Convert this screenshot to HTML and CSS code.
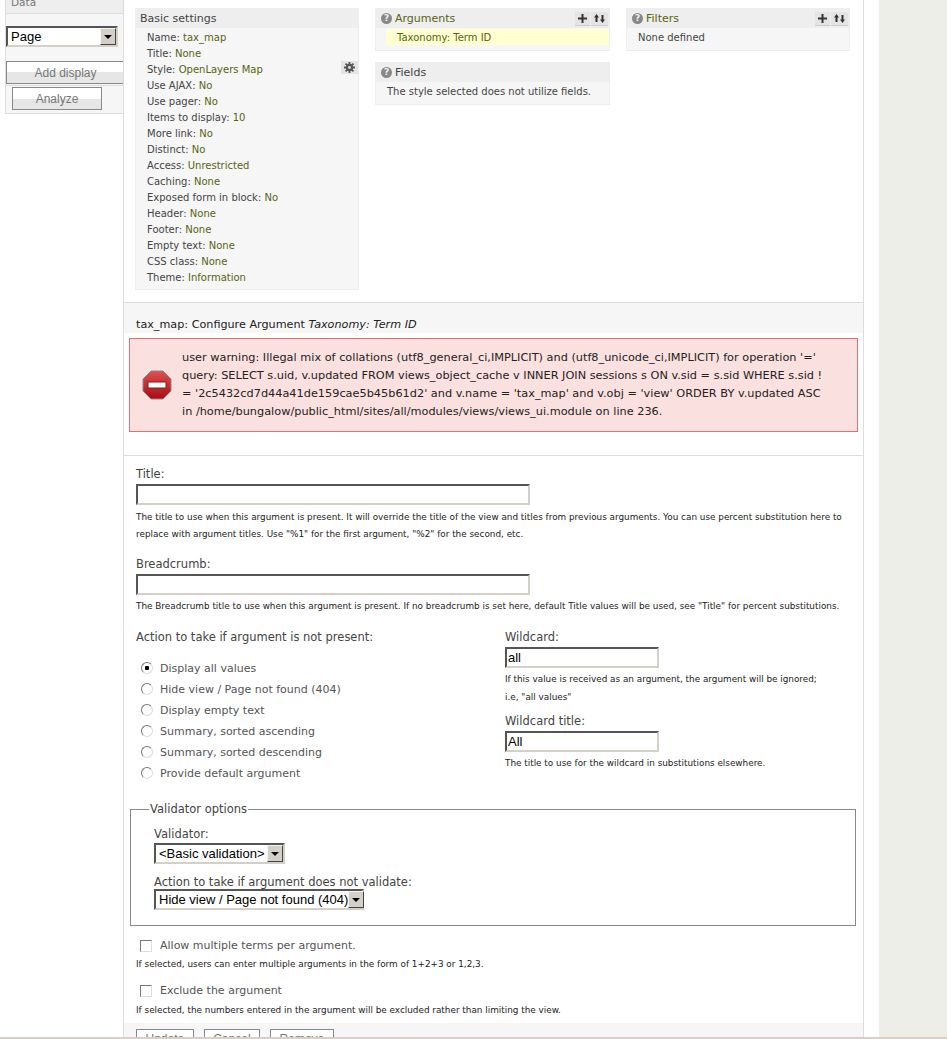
FILE: index.html
```html
<!DOCTYPE html>
<html lang="en">
<head>
    <meta charset="UTF-8">
    <meta name="viewport" content="width=device-width, initial-scale=1.0">
    <title>tax_map: Configure Argument</title>
    <link rel="stylesheet" href="styles.css">
</head>
<body>
    <div class="page">
        <!-- Displays sidebar -->
        <aside class="sidebar">
            <div class="sidebar-title"><span>Data</span></div>
            <div class="sidebar-select">
                <div class="select select-page"><span class="select-value">Page</span><span class="select-arrow"></span></div>
            </div>
            <div class="sidebar-add"><button class="side-button add-display">Add display</button></div>
            <div class="sidebar-analyze"><button class="side-button analyze">Analyze</button></div>
        </aside>

        <main class="main">
            <!-- View settings -->
            <section class="settings">
                <div class="settings-col col-basic">
                    <div class="box">
                        <h3 class="box-title">Basic settings</h3>
                        <ul class="basic-list">
                            <li>Name: <a>tax_map</a></li>
                            <li>Title: <a>None</a></li>
                            <li>Style: <a>OpenLayers Map</a>
                                <span class="gear">
                                    <svg width="11" height="11" viewBox="0 0 12 12"><path d="M5 0h2v2l1.2.5L9.6 1 11 2.400 9.500 3.800 10 5h2v2h-2l-.5 1.200L11 9.600 9.600 11 8.200 9.500 7 10v2H5v-2l-1.200-.5L2.400 11 1 9.600l1.500-1.400L2 7H0V5h2l.5-1.200L1 2.400 2.400 1l1.400 1.500L5 2z" fill="#555"/><circle cx="6" cy="6" r="1.600" fill="#ddd"/></svg>
                                </span>
                            </li>
                            <li>Use AJAX: <a>No</a></li>
                            <li>Use pager: <a>No</a></li>
                            <li>Items to display: <a>10</a></li>
                            <li>More link: <a>No</a></li>
                            <li>Distinct: <a>No</a></li>
                            <li>Access: <a>Unrestricted</a></li>
                            <li>Caching: <a>None</a></li>
                            <li>Exposed form in block: <a>No</a></li>
                            <li>Header: <a>None</a></li>
                            <li>Footer: <a>None</a></li>
                            <li>Empty text: <a>None</a></li>
                            <li>CSS class: <a>None</a></li>
                            <li>Theme: <a>Information</a></li>
                        </ul>
                    </div>
                </div>
                <div class="settings-col col-args">
                    <div class="box">
                        <h3 class="box-title"><span class="help">?</span><a>Arguments</a>
                            <span class="box-actions">
                                <span class="box-action"><svg width="11" height="11" viewBox="0 0 11 11"><path d="M4.500 1h2v3.500H10v2H6.500V10h-2V6.500H1v-2h3.500z" fill="#333"/></svg></span>
                                <span class="box-action action-sort"><svg width="13" height="11" viewBox="0 0 13 11"><path d="M3.500 1 6 4.500H4.500V9h-2V4.500H1zM9.500 10 7 6.500h1.500V2h2v4.500H12z" fill="#333"/></svg></span>
                            </span>
                        </h3>
                        <div class="box-body"><div class="arg-row"><a>Taxonomy: Term ID</a></div></div>
                    </div>
                    <div class="box">
                        <h3 class="box-title"><span class="help">?</span>Fields</h3>
                        <div class="box-body"><p class="box-text">The style selected does not utilize fields.</p></div>
                    </div>
                </div>
                <div class="settings-col col-filters">
                    <div class="box">
                        <h3 class="box-title"><span class="help">?</span><a>Filters</a>
                            <span class="box-actions">
                                <span class="box-action"><svg width="11" height="11" viewBox="0 0 11 11"><path d="M4.500 1h2v3.500H10v2H6.500V10h-2V6.500H1v-2h3.500z" fill="#333"/></svg></span>
                                <span class="box-action action-sort"><svg width="13" height="11" viewBox="0 0 13 11"><path d="M3.500 1 6 4.500H4.500V9h-2V4.500H1zM9.500 10 7 6.500h1.500V2h2v4.500H12z" fill="#333"/></svg></span>
                            </span>
                        </h3>
                        <div class="box-body"><p class="box-text">None defined</p></div>
                    </div>
                </div>
            </section>

            <div class="config-head">
                <h2 class="config-title">tax_map: Configure Argument <em>Taxonomy: Term ID</em></h2>
            </div>

            <!-- Error message -->
            <div class="message-error">
                <svg class="error-icon" width="30" height="30" viewBox="0 0 30 30">
                    <defs>
                        <linearGradient id="stopRed" x1="0" y1="0" x2="0" y2="1">
                            <stop offset="0" stop-color="#e05050"/>
                            <stop offset="1" stop-color="#a80c14"/>
                        </linearGradient>
                    </defs>
                    <path d="M9 1h12l8 8v12l-8 8H9l-8-8V9z" fill="url(#stopRed)" stroke="#8a8a8a" stroke-width="1"/>
                    <rect x="6" y="12" width="18" height="6" fill="#fff" stroke="#7a2020" stroke-width="1"/>
                </svg>
                <p class="error-text">user warning: Illegal mix of collations (utf8_general_ci,IMPLICIT) and (utf8_unicode_ci,IMPLICIT) for operation '='<br>query: SELECT s.uid, v.updated FROM views_object_cache v INNER JOIN sessions s ON v.sid = s.sid WHERE s.sid !<br>= '2c5432cd7d44a41de159cae5b45b61d2' and v.name = 'tax_map' and v.obj = 'view' ORDER BY v.updated ASC<br>in /home/bungalow/public_html/sites/all/modules/views/views_ui.module on line 236.</p>
            </div>

            <!-- Argument form -->
            <form class="config-form">
                <div class="form-item item-title">
                    <label class="form-label">Title:</label>
                    <input class="text-input input-wide" type="text">
                    <p class="description">The title to use when this argument is present. It will override the title of the view and titles from previous arguments. You can use percent substitution here to replace with argument titles. Use "%1" for the first argument, "%2" for the second, etc.</p>
                </div>
                <div class="form-item item-breadcrumb">
                    <label class="form-label">Breadcrumb:</label>
                    <input class="text-input input-wide" type="text">
                    <p class="description">The Breadcrumb title to use when this argument is present. If no breadcrumb is set here, default Title values will be used, see "Title" for percent substitutions.</p>
                </div>

                <div class="form-columns">
                    <div class="column-action">
                        <label class="form-label">Action to take if argument is not present:</label>
                        <div class="radios">
                            <label class="option"><input type="radio" name="action" checked>Display all values</label>
                            <label class="option"><input type="radio" name="action">Hide view / Page not found (404)</label>
                            <label class="option"><input type="radio" name="action">Display empty text</label>
                            <label class="option"><input type="radio" name="action">Summary, sorted ascending</label>
                            <label class="option"><input type="radio" name="action">Summary, sorted descending</label>
                            <label class="option"><input type="radio" name="action">Provide default argument</label>
                        </div>
                    </div>
                    <div class="column-wildcard">
                        <label class="form-label">Wildcard:</label>
                        <input class="text-input input-short" type="text" value="all">
                        <p class="description wildcard-desc">If this value is received as an argument, the argument will be ignored;<br>i.e, "all values"</p>
                        <label class="form-label label-wildcard-title">Wildcard title:</label>
                        <input class="text-input input-short" type="text" value="All">
                        <p class="description">The title to use for the wildcard in substitutions elsewhere.</p>
                    </div>
                </div>

                <fieldset class="validator">
                    <legend>Validator options</legend>
                    <label class="form-label">Validator:</label>
                    <div class="select select-validator"><span class="select-value">&lt;Basic validation&gt;</span><span class="select-arrow"></span></div>
                    <label class="form-label label-fail">Action to take if argument does not validate:</label>
                    <div class="select select-fail"><span class="select-value">Hide view / Page not found (404)</span><span class="select-arrow"></span></div>
                </fieldset>

                <div class="check-item">
                    <label class="option"><input type="checkbox">Allow multiple terms per argument.</label>
                    <p class="description">If selected, users can enter multiple arguments in the form of 1+2+3 or 1,2,3.</p>
                </div>
                <div class="check-item check-exclude">
                    <label class="option"><input type="checkbox">Exclude the argument</label>
                    <p class="description">If selected, the numbers entered in the argument will be excluded rather than limiting the view.</p>
                </div>

                <div class="form-buttons">
                    <button type="button" class="form-button">Update</button>
                    <button type="button" class="form-button">Cancel</button>
                    <button type="button" class="form-button">Remove</button>
                </div>
            </form>
        </main>

        <div class="gutter"></div>
    </div>
</body>
</html>
```

FILE: styles.css
```css
html, body {
    margin: 0;
    padding: 0;
    height: 1039px;
    overflow: hidden;
    background: #fff;
}
body {
    font-family: "DejaVu Sans", Verdana, sans-serif;
    font-size: 10px;
    color: #444;
}
.page {
    display: flex;
    height: 1039px;
    overflow: hidden;
    border-bottom: 2px solid #d6d0c8;
    box-sizing: border-box;
}

/* sidebar */
.sidebar {
    width: 118px;
    margin-left: 5px;
    height: 114px;
    flex: none;
    box-sizing: border-box;
    background: #f6f6f6;
    border-left: 1px solid #ddd;
    border-bottom: 1px solid #ddd;
}
.sidebar-title {
    height: 8px;
    padding: 0 0 5px 5px;
    background: #eee;
    border-bottom: 1px solid #ddd;
    overflow: hidden;
    display: flex;
    align-items: flex-end;
    color: #777;
    font-size: 10.500px;
}
.sidebar-select {
    padding: 12px 0 0 0;
    height: 35px;
}
.sidebar-add {
    height: 24px;
    border-bottom: 1px solid #ddd;
}
.sidebar-analyze {
    padding: 1px 0 0 6px;
}
.side-button {
    display: block;
    height: 23px;
    padding: 0;
    border: 1px solid #888;
    border-radius: 0;
    background: linear-gradient(#fff 50%, #e6e6e6 50%);
    color: #777;
    font-family: "Liberation Sans", Arial, sans-serif;
    font-size: 12px;
}
.add-display {
    width: 118px;
    border-right: 0;
}
.analyze {
    width: 90px;
}

/* selects */
.select {
    display: inline-flex;
    align-items: center;
    justify-content: space-between;
    box-sizing: border-box;
    height: 21px;
    background: #fff;
    border: 2px solid;
    border-color: #555 #d4d0c8 #d4d0c8 #555;
    color: #000;
    font-family: "Liberation Sans", Arial, sans-serif;
    font-size: 13px;
    white-space: nowrap;
}
.select-value {
    padding-left: 3px;
}
.select-arrow {
    flex: none;
    display: flex;
    align-items: center;
    justify-content: center;
    width: 16px;
    height: 17px;
    box-sizing: border-box;
    background: #d4d0c8;
    border: 1px solid;
    border-color: #f4f4f4 #444 #444 #f4f4f4;
}
.select-arrow::after {
    content: "";
    border: 4px solid transparent;
    border-top: 4px solid #000;
    border-bottom: 0;
}
.select-page {
    width: 112px;
}
.select-validator {
    width: 131px;
    margin-top: 1px;
}
.select-fail {
    width: 210px;
}

/* settings */
.main {
    width: 741px;
    flex: none;
    box-sizing: border-box;
    border-left: 1px solid #ddd;
    border-right: 1px solid #ddd;
}
.settings {
    display: flex;
    height: 303px;
    padding: 8px 0 0 11px;
    box-sizing: border-box;
    border-bottom: 1px solid #ddd;
}
.settings-col {
    display: flex;
    flex-direction: column;
    gap: 11px;
}
.col-basic {
    width: 224px;
    margin-right: 16px;
}
.col-args {
    width: 235px;
    margin-right: 16px;
}
.col-filters {
    width: 224px;
}
.box {
    background: #f6f6f6;
    border-bottom: 1px solid #eee;
    border-right: 1px solid #eee;
    border-left: 1px solid #eee;
}
.box-title {
    position: relative;
    display: flex;
    align-items: center;
    height: 20px;
    margin: 0;
    padding-left: 4px;
    background: #eee;
    font-size: 11px;
    font-weight: normal;
    color: #444;
}
.box-title a,
.basic-list a,
.arg-row a {
    color: #566410;
}
.help {
    flex: none;
    width: 11px;
    height: 11px;
    margin: 0 3px 0 1px;
    border-radius: 50%;
    background: #888;
    color: #eee;
    font-size: 9px;
    font-weight: bold;
    line-height: 11px;
    text-align: center;
}
.box-actions {
    position: absolute;
    right: 1px;
    top: 4px;
    display: flex;
    gap: 1px;
}
.box-action {
    display: flex;
    align-items: center;
    justify-content: center;
    width: 15px;
    height: 13px;
    background: #e4e4e4;
    border-bottom: 1px solid #ccc;
}
.action-sort {
    width: 17px;
}
.basic-list {
    list-style: none;
    margin: 0;
    padding: 1px 0 4px 11px;
}
.basic-list li {
    position: relative;
    height: 16px;
    line-height: 18px;
}
.gear {
    position: absolute;
    right: 0;
    top: 0;
    display: flex;
    align-items: center;
    justify-content: center;
    width: 17px;
    height: 13px;
    background: #e4e4e4;
}
.box-body {
    padding: 1px 0 5px 0;
}
.arg-row {
    margin-left: 10px;
    height: 16px;
    line-height: 18px;
    padding-left: 11px;
    background: #ffffd0;
}
.box-text {
    margin: 0 0 0 11px;
    height: 16px;
    line-height: 18px;
}

/* config */
.config-head {
    height: 30px;
    background: #f6f6f6;
    box-sizing: border-box;
    padding: 15px 0 0 12px;
}
.config-title {
    margin: 0;
    font-size: 11.200px;
    line-height: 14px;
    font-weight: normal;
    color: #222;
}
.message-error {
    display: flex;
    align-items: center;
    margin: 5px 5px 0 5px;
    height: 94px;
    box-sizing: border-box;
    background: #fbe0e0;
    border: 1px solid #e07078;
}
.error-icon {
    flex: none;
    margin: 0 10px 0 12px;
}
.error-text {
    margin: 0;
    font-size: 11.300px;
    line-height: 18px;
    color: #222;
}
.config-form {
    margin-top: 23px;
    border-top: 1px solid #ddd;
    padding: 10px 0 0 0;
}
.form-label {
    display: block;
    height: 17px;
    line-height: 16px;
    font-size: 11.500px;
    color: #444;
}
.form-item {
    padding-left: 12px;
}
.text-input {
    display: block;
    box-sizing: border-box;
    height: 21px;
    margin: 1px 0 0 0;
    padding: 0 1px;
    border: 2px solid;
    border-color: #555 #d4d0c8 #d4d0c8 #555;
    background: #fff;
    color: #000;
    font-family: "Liberation Sans", Arial, sans-serif;
    font-size: 13px;
    outline: 0;
}
.input-wide {
    width: 394px;
}
.input-short {
    width: 154px;
}
.description {
    margin: 0;
    font-size: 8.850px;
    line-height: 17px;
    color: #222;
}
.item-title .description {
    margin-top: 4px;
}
.item-breadcrumb {
    margin-top: 13px;
}
.item-breadcrumb .description {
    margin-top: 3px;
}
.form-columns {
    display: flex;
    margin-top: 14px;
    padding-left: 12px;
}
.column-action {
    width: 369px;
}
.radios {
    margin-top: 12px;
}
.option {
    display: flex;
    align-items: center;
    height: 21px;
    padding-left: 5px;
    font-size: 11px;
    color: #555;
}
.option input {
    appearance: none;
    flex: none;
    width: 12px;
    height: 12px;
    margin: 0 7px 0 0;
    background: #fff;
    border: 1px solid;
    border-color: #777 #ddd #ddd #777;
}
.option input[type="radio"] {
    border-radius: 50%;
    position: relative;
    top: -1px;
}
.option input:checked {
    background: radial-gradient(circle, #000 2px, #fff 2.500px);
}
.wildcard-desc {
    margin-top: 2px;
    line-height: 18px;
}
.label-wildcard-title {
    margin: 7px 0 1px 0;
}
.column-wildcard .description:last-child {
    margin-top: 3px;
}
.validator {
    margin: 18px 7px 0 6px;
    padding: 10px 0 13px 23px;
    height: 124px;
    box-sizing: border-box;
    border: 1px solid #888;
}
.validator legend {
    padding: 0 1px;
    margin-left: -5px;
    font-size: 11.500px;
    color: #444;
}
.validator .form-label {
    height: 16px;
}
.validator .label-fail {
    margin-top: 10px;
    height: 15px;
}
.check-item {
    margin-top: 9px;
    padding-left: 12px;
}
.check-item .option {
    padding-left: 4px;
}
.check-item .option input {
    margin-right: 8px;
}
.check-exclude {
    margin-top: 7px;
}
.check-exclude .description {
    margin-top: 1px;
}
.form-buttons {
    display: flex;
    gap: 10px;
    margin-top: 4px;
    height: 30px;
    padding: 6px 0 0 12px;
    box-sizing: border-box;
    background: #f6f6f6;
}
.form-button {
    flex: none;
    height: 20px;
    padding: 0 8.500px;
    border: 1px solid #888;
    border-radius: 0;
    background: linear-gradient(#fff 50%, #e6e6e6 50%);
    color: #777;
    font-family: "Liberation Sans", Arial, sans-serif;
    font-size: 12px;
}
.gutter {
    flex: none;
    width: 68px;
    margin-left: 15px;
    background: #eeeee8;
}
```
